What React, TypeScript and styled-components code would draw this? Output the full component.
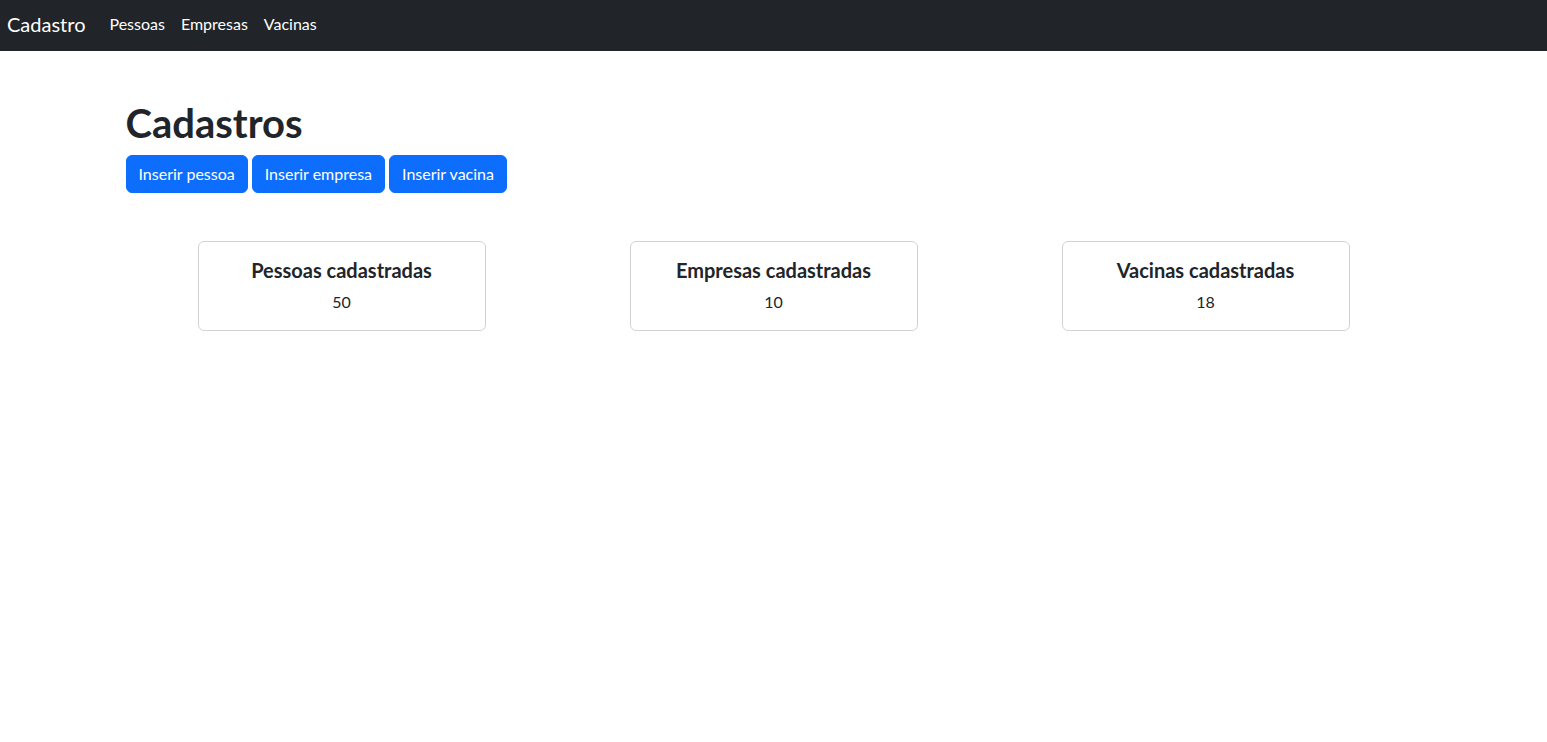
import React from "react";
import styled, { createGlobalStyle } from "styled-components";

const GlobalStyle = createGlobalStyle`
    * { box-sizing: border-box; }
    body {
        margin: 0;
        font-family: Lato, "Noto Sans", sans-serif;
        font-size: 16px;
        line-height: 1.5;
        color: #212529;
        background: #fff;
    }
`;

const Navbar = styled.nav`
    display: flex;
    align-items: center;
    height: 51px;
    padding: 0 7px 4px;
    background: #212529;
`;

const Brand = styled.a`
    font-size: 20px;
    line-height: 30px;
    color: #fff;
    margin-right: 16px;
    text-decoration: none;
`;

const NavLink = styled.a`
    padding: 8px;
    font-size: 16px;
    color: #fff;
    text-decoration: none;
`;

const Container = styled.main`
    max-width: 1320px;
    margin: 48px auto 0;
    padding: 0 12px;
`;

const Title = styled.h1`
    margin: 0 0 8px;
    font-size: 40px;
    line-height: 48px;
    font-weight: 700;
`;

const ButtonRow = styled.div`
    display: flex;
    gap: 4px;
`;

const Button = styled.button`
    font-family: inherit;
    font-size: 16px;
    line-height: 24px;
    padding: 6px 12px;
    color: #fff;
    background: #0d6efd;
    border: 1px solid #0d6efd;
    border-radius: 6px;
    cursor: pointer;
`;

const CardRow = styled.div`
    display: flex;
    justify-content: space-around;
    margin-top: 48px;
`;

const Card = styled.div`
    width: 288px;
    padding: 16px;
    border: 1px solid rgba(0, 0, 0, 0.175);
    border-radius: 6px;
    text-align: center;
`;

const CardTitle = styled.h5`
    margin: 0 0 8px;
    font-size: 20px;
    line-height: 24px;
    font-weight: 700;
`;

const CardText = styled.p`
    margin: 0;
`;

const stats = [
    { title: "Pessoas cadastradas", count: 50 },
    { title: "Empresas cadastradas", count: 10 },
    { title: "Vacinas cadastradas", count: 18 },
];

const App = () => {
    return (
        <>
            <GlobalStyle />
            <Navbar>
                <Brand href="#">Cadastro</Brand>
                <NavLink href="#">Pessoas</NavLink>
                <NavLink href="#">Empresas</NavLink>
                <NavLink href="#">Vacinas</NavLink>
            </Navbar>
            <Container>
                <Title>Cadastros</Title>
                <ButtonRow>
                    <Button>Inserir pessoa</Button>
                    <Button>Inserir empresa</Button>
                    <Button>Inserir vacina</Button>
                </ButtonRow>
                <CardRow>
                    {stats.map((s) => (
                        <Card key={s.title}>
                            <CardTitle>{s.title}</CardTitle>
                            <CardText>{s.count}</CardText>
                        </Card>
                    ))}
                </CardRow>
            </Container>
        </>
    );
};

export default App;
